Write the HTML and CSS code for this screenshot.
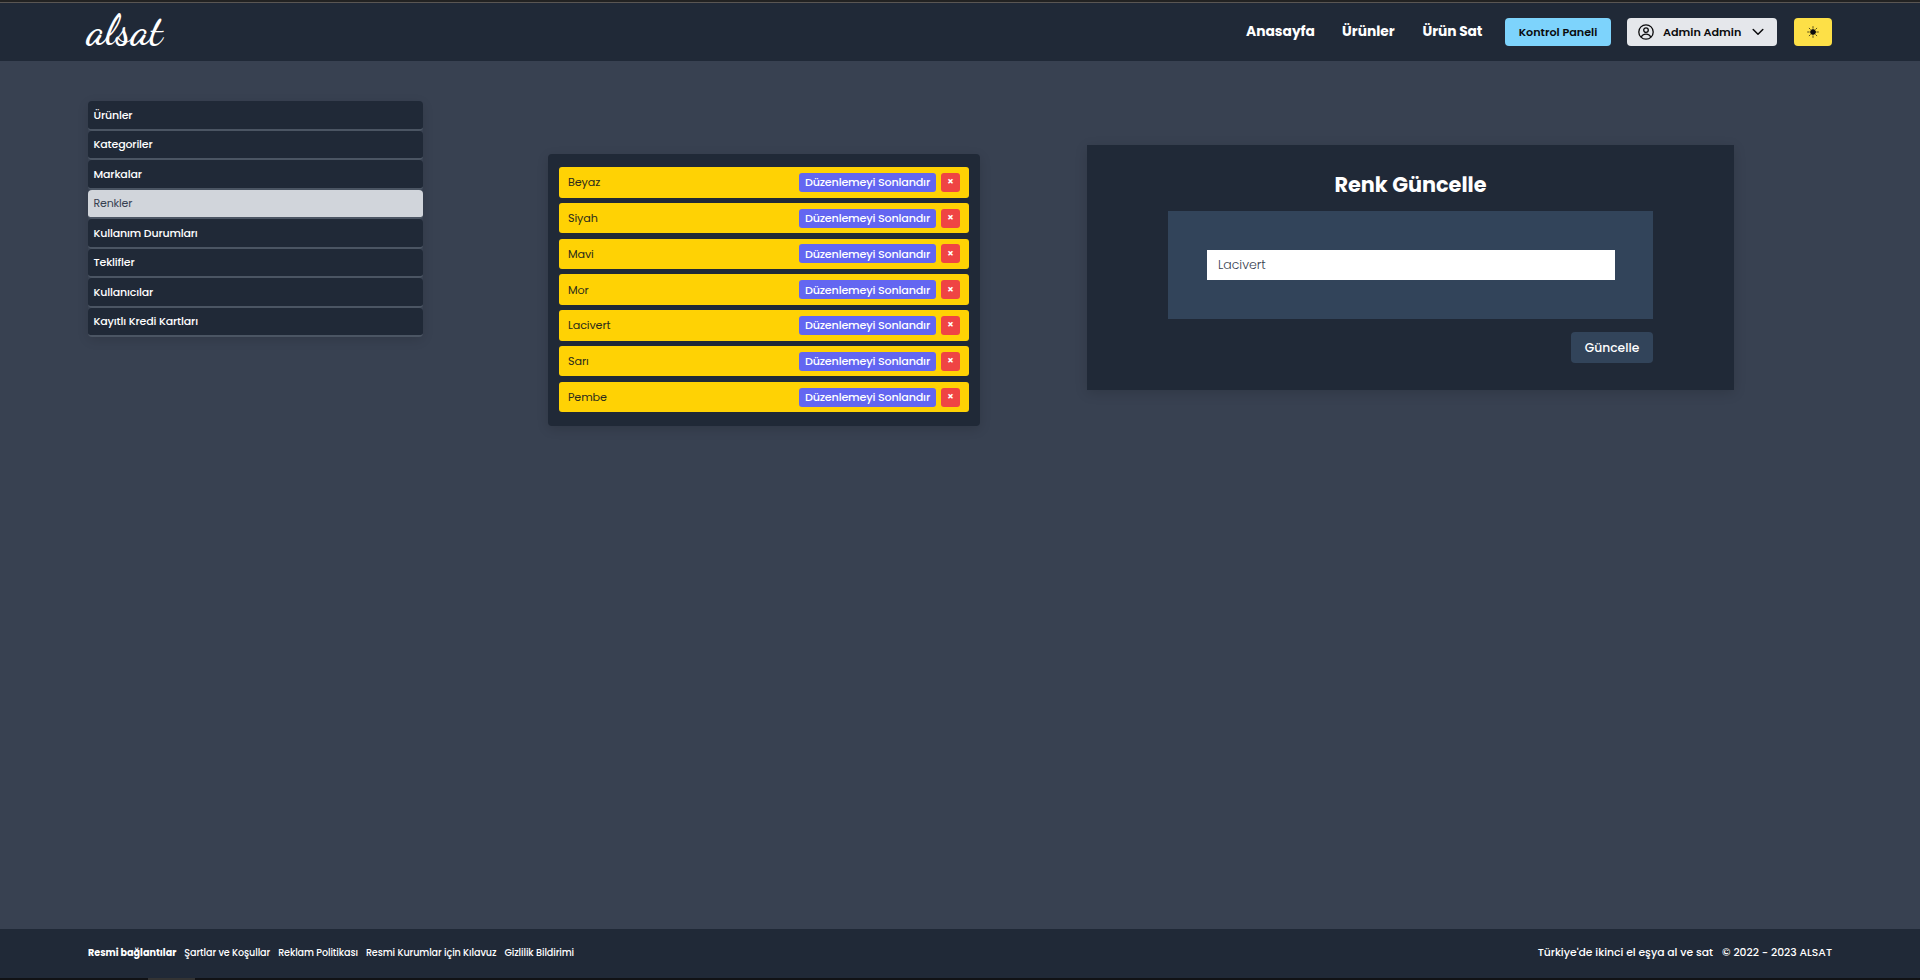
FILE: index.html
```
<!DOCTYPE html>
<html lang="tr">
<head>
<meta charset="utf-8">
<title>alsat</title>
<link rel="stylesheet" href="styles.css">
</head>
<body>
<div class="top-strip"></div>
<header class="header">
  <a class="logo">alsat</a>
  <nav class="nav">
    <a class="nav-link nav-home">Anasayfa</a>
    <a class="nav-link nav-products">Ürünler</a>
    <a class="nav-link nav-sell">Ürün Sat</a>
    <a class="btn btn-panel">Kontrol Paneli</a>
    <button class="btn btn-user">
      <svg class="icon-user" viewBox="0 0 16 16" fill="none" stroke="currentColor" stroke-width="1.3"><circle cx="8" cy="8" r="7.2"/><circle cx="8" cy="6.1" r="2.3"/><path d="M3.4 13.2c.5-2.1 2.300-3.100 4.600-3.100s4.100 1 4.600 3.100"/></svg>
      <span class="user-name">Admin Admin</span>
      <svg class="icon-chevron" viewBox="0 0 12 8" fill="none" stroke="currentColor" stroke-width="1.5" stroke-linecap="round" stroke-linejoin="round"><path d="M1.200 1.500 6 6.300l4.800-4.800"/></svg>
    </button>
    <button class="btn btn-theme">
      <svg class="icon-sun" viewBox="0 0 12 12" stroke="currentColor" stroke-width=".7" stroke-linecap="round"><circle cx="6" cy="6" r="2.500" fill="currentColor"/><path d="M6 .6v1.600M6 9.800v1.600M.6 6h1.600M9.800 6h1.600M2.200 2.200l1.100 1.100M8.700 8.700l1.100 1.100M2.200 9.800l1.100-1.100M8.700 3.300l1.100-1.100"/></svg>
    </button>
  </nav>
</header>
<main class="main">
  <ul class="sidebar">
    <li class="side-item">Ürünler</li>
    <li class="side-item">Kategoriler</li>
    <li class="side-item">Markalar</li>
    <li class="side-item active">Renkler</li>
    <li class="side-item">Kullanım Durumları</li>
    <li class="side-item">Teklifler</li>
    <li class="side-item">Kullanıcılar</li>
    <li class="side-item">Kayıtlı Kredi Kartları</li>
  </ul>
  <ul class="colors">
    <li class="color"><span class="color-name">Beyaz</span><button class="edit">Düzenlemeyi Sonlandır</button><button class="remove">×</button></li>
    <li class="color"><span class="color-name">Siyah</span><button class="edit">Düzenlemeyi Sonlandır</button><button class="remove">×</button></li>
    <li class="color"><span class="color-name">Mavi</span><button class="edit">Düzenlemeyi Sonlandır</button><button class="remove">×</button></li>
    <li class="color"><span class="color-name">Mor</span><button class="edit">Düzenlemeyi Sonlandır</button><button class="remove">×</button></li>
    <li class="color"><span class="color-name">Lacivert</span><button class="edit">Düzenlemeyi Sonlandır</button><button class="remove">×</button></li>
    <li class="color"><span class="color-name">Sarı</span><button class="edit">Düzenlemeyi Sonlandır</button><button class="remove">×</button></li>
    <li class="color"><span class="color-name">Pembe</span><button class="edit">Düzenlemeyi Sonlandır</button><button class="remove">×</button></li>
  </ul>
  <form class="card">
    <h1 class="card-title">Renk Güncelle</h1>
    <div class="field"><input class="input" type="text" value="Lacivert"></div>
    <button class="submit" type="button">Güncelle</button>
  </form>
</main>
<footer class="footer">
  <div class="links">
    <b class="links-title">Resmi bağlantılar</b>
    <a class="link">Şartlar ve Koşullar</a>
    <a class="link">Reklam Politikası</a>
    <a class="link">Resmi Kurumlar için Kılavuz</a>
    <a class="link">Gizlilik Bildirimi</a>
  </div>
  <div class="legal"><span>Türkiye'de ikinci el eşya al ve sat</span><span>© 2022 - 2023 ALSAT</span></div>
</footer>
<div class="bottom-strip"><span class="strip-tab"></span></div>
</body>
</html>
```
FILE: styles.css
```
* { box-sizing: border-box; margin: 0; padding: 0; }
body {
  height: 980px;
  overflow: hidden;
  display: flex;
  flex-direction: column;
  background: #384151;
  color: #fff;
  font: 500 11px/18px Poppins, Inter, sans-serif;
}
ul { list-style: none; }
button, input { font: inherit; border: 0; color: inherit; }

.top-strip { height: 3px; flex: none; background: #222; border-bottom: 1px solid #5a5653; }

.header {
  height: 58px;
  flex: none;
  padding: 0 88px 0 87px;
  display: flex;
  justify-content: space-between;
  background: #202937;
}
.logo { font: 600 42.800px/56px "Dancing Script", "Liberation Serif", cursive; }
.nav { display: flex; height: 28px; margin-top: 15px; }
.nav-link { font-size: 13.8px; font-weight: 700; line-height: 28px; white-space: nowrap; }
.nav-home { width: 96px; }
.nav-products { width: 80.500px; }
.nav-sell { width: 82.500px; letter-spacing: -.1px; }
.btn {
  height: 28px;
  border-radius: 4px;
  display: flex;
  align-items: center;
  justify-content: center;
  color: #0b0b0d;
  font-size: 11.2px;
  font-weight: 600;
  white-space: nowrap;
}
.btn-panel { width: 106px; margin-right: 16px; background: #7dd3fc; }
.btn-user { width: 150px; margin-right: 17px; padding: 0 13px 0 11px; justify-content: flex-start; background: #e5e7eb; }
.icon-user { width: 16px; height: 16px; margin-right: 9px; flex: none; }
.user-name { width: 89px; text-align: left; }
.icon-chevron { width: 12px; height: 8px; flex: none; }
.btn-theme { width: 38px; background: #fde047; }
.icon-sun { width: 12px; height: 12px; margin-top: -1px; }

.main { flex: 1; display: flex; align-items: flex-start; padding: 40px 0 0 88px; }

.sidebar {
  width: 335px;
  border-radius: 5px;
  background: #384151;
  box-shadow: 0 3px 12px rgba(0, 0, 0, .12);
  letter-spacing: -.16px;
}
.side-item {
  height: 29.5px;
  padding: 4.500px 5.500px;
  border-bottom: 2px solid #4b5563;
  border-radius: 4px;
  background: #202937;
}
.side-item.active { background: #d1d5db; color: #374151; font-weight: 400; }

.colors {
  width: 432px;
  height: 272px;
  margin: 53px 0 0 125px;
  padding: 13px 11px;
  display: flex;
  flex-direction: column;
  gap: 5.300px;
  border-radius: 4px;
  background: #202937;
  box-shadow: 0 3px 12px rgba(0, 0, 0, .14);
}
.color {
  height: 30.500px;
  flex: none;
  padding: 0 7px 0 9px;
  display: flex;
  align-items: center;
  border-radius: 3px;
  background: #ffd204;
  color: #2b2b1c;
  font-size: 11.200px;
  letter-spacing: -.12px;
  font-weight: 400;
}
.color-name { flex: 1; }
.edit, .remove { height: 19px; border-radius: 3px; color: #fff; white-space: nowrap; }
.edit { width: 137px; margin-right: 5px; background: #6366f1; font-weight: 500; letter-spacing: -.2px; }
.remove { width: 19px; margin-right: 2px; background: #ef4444; font-size: 10.500px; font-weight: 600; }

.card {
  width: 647px;
  height: 245px;
  margin: 44px 0 0 107px;
  padding: 26px 81px 0;
  display: flex;
  flex-direction: column;
  background: #202937;
  box-shadow: 0 3px 12px rgba(0, 0, 0, .14);
}
.card-title { height: 40px; text-align: center; font-size: 20.800px; font-weight: 700; line-height: 28px; }
.field { height: 108px; padding: 39px 38px 39px 39px; background: #32445a; }
.input {
  display: block;
  width: 100%;
  height: 30px;
  padding: 0 11px;
  background: #fff;
  color: #374151;
  font-size: 12.5px;
  font-weight: 300;
}
.submit {
  width: 82px;
  height: 31px;
  margin: 13px 0 0;
  align-self: flex-end;
  border-radius: 4px;
  background: #32445a;
  font-size: 12.300px;
}

.footer {
  height: 49px;
  flex: none;
  padding: 0 88px;
  display: flex;
  justify-content: space-between;
  background: #202937;
  line-height: 47px;
  white-space: nowrap;
}
.links { display: flex; gap: 8px; font-size: 9.600px; letter-spacing: -.09px; }
.links-title { font-weight: 700; letter-spacing: 0; }
.legal { display: flex; gap: 9px; font-size: 10.800px; }

.bottom-strip { height: 2px; flex: none; background: #111215; padding-left: 148px; }
.strip-tab { display: block; width: 47px; height: 2px; background: #333; }
```
